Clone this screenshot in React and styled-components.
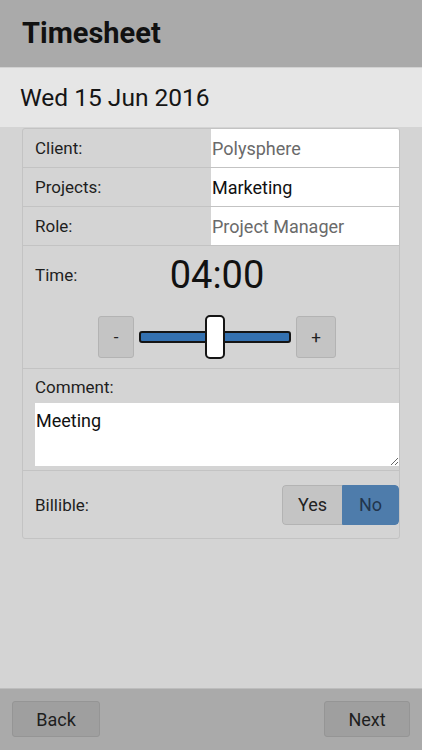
import React from 'react';
import styled, { createGlobalStyle } from 'styled-components';

const GlobalStyle = createGlobalStyle`
  html, body {
    margin: 0;
    padding: 0;
    background: #d4d4d4;
    font-family: Roboto, "Liberation Sans", sans-serif;
    color: #1e1e1e;
  }
  #root {
    min-height: 750px;
    display: flex;
    flex-direction: column;
  }
`;

const Page = styled.div`
  flex: 1;
  display: flex;
  flex-direction: column;
  min-height: 750px;
`;

const Header = styled.header`
  height: 67px;
  background: #aaaaaa;
  display: flex;
  align-items: center;
  padding: 0 22px;
  box-sizing: border-box;
  h1 {
    margin: 0;
    font-size: 29px;
    font-weight: 700;
    color: #111;
    padding-bottom: 2px;
  }
`;

const DateBar = styled.div`
  height: 60px;
  background: #e6e6e6;
  border-top: 1px solid #d2d2d2;
  display: flex;
  align-items: center;
  padding: 0 20px;
  font-size: 24.5px;
  color: #151515;
  box-sizing: border-box;
`;

const Main = styled.main`
  flex: 1;
  padding: 1px 22px 0;
`;

const Card = styled.div`
  background: #d4d4d4;
  border: 1px solid #c3c3c3;
  border-radius: 3px;
  overflow: hidden;
`;

const FieldRow = styled.div`
  display: grid;
  grid-template-columns: 188px 1fr;
  height: 39px;
  border-bottom: 1px solid #c3c3c3;
  box-sizing: border-box;
`;

const Label = styled.div`
  display: flex;
  align-items: center;
  padding-left: ${(p) => (p.$flush ? 0 : 12)}px;
  font-size: 17px;
  color: #1e1e1e;
`;

const Value = styled.div`
  display: flex;
  align-items: center;
  background: #fff;
  padding-left: 1px;
  font-size: 18px;
  color: ${(p) => (p.$muted ? '#6a6a6a' : '#111')};
`;

const Section = styled.div`
  border-bottom: ${(p) => (p.$last ? 'none' : '1px solid #c3c3c3')};
  padding: ${(p) => p.$pad || '0'};
`;

const TimeTop = styled.div`
  display: grid;
  grid-template-columns: 1fr auto 1fr;
  align-items: center;
  height: 54px;
  padding-left: 12px;
  padding-top: 2px;
`;

const TimeValue = styled.span`
  font-size: 38px;
  color: #111;
`;

const SliderRow = styled.div`
  display: flex;
  justify-content: center;
  align-items: flex-start;
  gap: 5px;
  padding: 13px 0 0 12px;
  height: 66px;
  box-sizing: border-box;
`;

const StepButton = styled.button`
  width: ${(p) => p.$w}px;
  height: 42px;
  margin-top: 1px;
  background: #c4c4c4;
  border: 1px solid #b3b3b3;
  border-radius: 3px;
  font-family: inherit;
  font-size: 17px;
  color: #222;
  padding: 0;
`;

const Track = styled.div`
  position: relative;
  width: 152px;
  height: 44px;
  display: flex;
  align-items: center;
  &::before {
    content: '';
    flex: 1;
    height: 8px;
    background: #3471b0;
    border: 2px solid #151515;
    border-radius: 3px;
  }
`;

const Thumb = styled.div`
  position: absolute;
  left: 66px;
  top: 0;
  width: 16px;
  height: 40px;
  background: #fff;
  border: 2px solid #151515;
  border-radius: 5px;
`;

const CommentBox = styled.textarea`
  display: block;
  width: 100%;
  height: 63px;
  box-sizing: border-box;
  border: none;
  background: #fff;
  font-family: inherit;
  font-size: 18px;
  color: #111;
  padding: 7px 1px;
  margin-top: 6px;
  resize: vertical;
  outline: none;
`;

const BillRow = styled.div`
  display: flex;
  align-items: center;
  justify-content: space-between;
  height: 67px;
  padding-left: 12px;
  box-sizing: border-box;
`;

const Segmented = styled.div`
  display: flex;
  height: 40px;
  border-radius: 4px;
  overflow: hidden;
`;

const Segment = styled.div`
  width: ${(p) => p.$w}px;
  display: flex;
  align-items: center;
  justify-content: center;
  font-size: 18px;
  background: ${(p) => (p.$on ? '#4e7cab' : '#c4c4c4')};
  color: ${(p) => (p.$on ? '#22354d' : '#222')};
  border: 1px solid ${(p) => (p.$on ? '#4e7cab' : '#b3b3b3')};
  border-right: ${(p) => (p.$on ? undefined : 'none')};
  border-radius: ${(p) => (p.$on ? '0 4px 4px 0' : '4px 0 0 4px')};
  box-sizing: border-box;
`;

const Footer = styled.footer`
  height: 62px;
  background: #aaaaaa;
  border-top: 1px solid #bdbdbd;
  display: flex;
  justify-content: space-between;
  align-items: flex-start;
  padding: 12px 12px 0;
  box-sizing: border-box;
`;

const NavButton = styled.button`
  width: ${(p) => p.$w}px;
  height: 36px;
  background: #9f9f9f;
  border: 1px solid #959595;
  border-radius: 3px;
  font-family: inherit;
  font-size: 18px;
  color: #1e1e1e;
  padding: 0;
`;

export default function App() {
  return (
    <Page>
      <GlobalStyle />
      <Header>
        <h1>Timesheet</h1>
      </Header>
      <DateBar>Wed 15 Jun 2016</DateBar>
      <Main>
        <Card>
          <FieldRow>
            <Label>Client:</Label>
            <Value $muted>Polysphere</Value>
          </FieldRow>
          <FieldRow>
            <Label>Projects:</Label>
            <Value>Marketing</Value>
          </FieldRow>
          <FieldRow>
            <Label>Role:</Label>
            <Value $muted>Project Manager</Value>
          </FieldRow>
          <Section>
            <TimeTop>
              <Label $flush>Time:</Label>
              <TimeValue>04:00</TimeValue>
              <span />
            </TimeTop>
            <SliderRow>
              <StepButton $w={36}>-</StepButton>
              <Track>
                <Thumb />
              </Track>
              <StepButton $w={40}>+</StepButton>
            </SliderRow>
          </Section>
          <Section $pad="8px 0 4px 12px">
            <Label $flush style={{ height: 20 }}>Comment:</Label>
            <CommentBox defaultValue="Meeting" />
          </Section>
          <Section $last>
            <BillRow>
              <Label $flush>Billible:</Label>
              <Segmented>
                <Segment $w={60}>Yes</Segment>
                <Segment $w={57} $on>No</Segment>
              </Segmented>
            </BillRow>
          </Section>
        </Card>
      </Main>
      <Footer>
        <NavButton $w={88}>Back</NavButton>
        <NavButton $w={86}>Next</NavButton>
      </Footer>
    </Page>
  );
}
